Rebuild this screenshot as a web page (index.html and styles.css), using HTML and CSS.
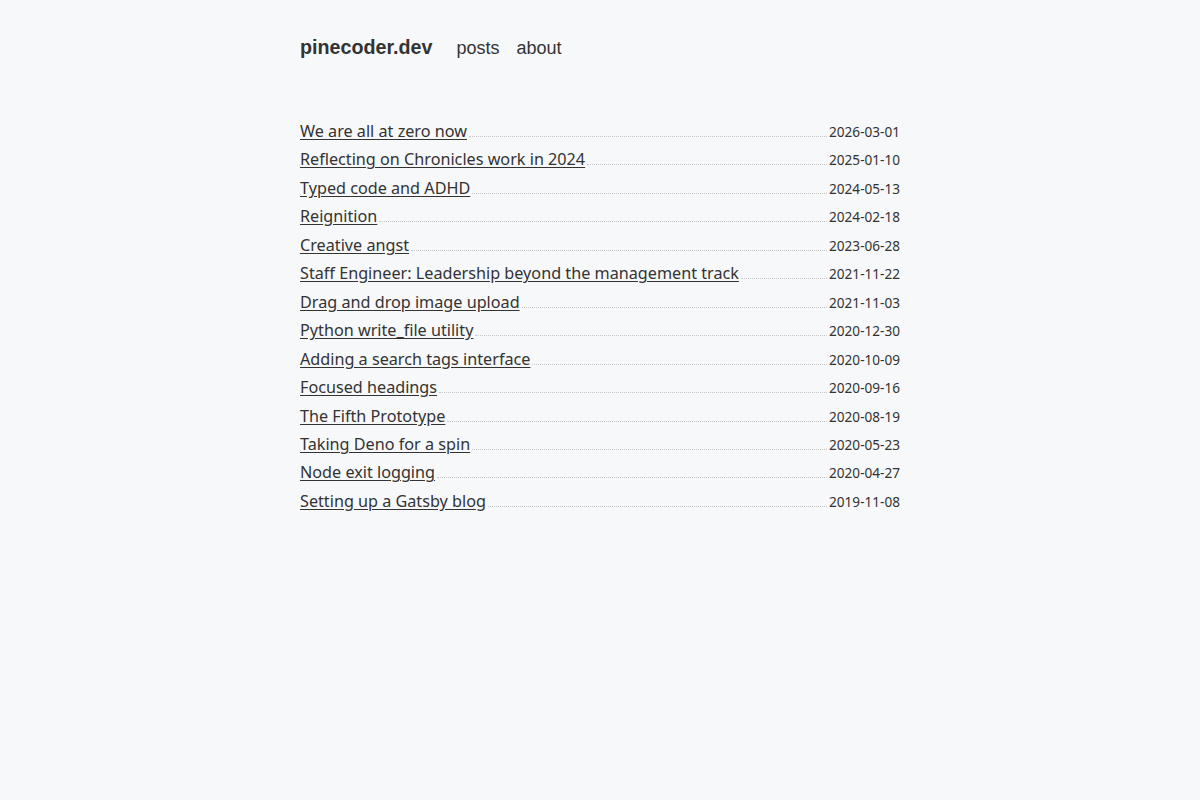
FILE: index.html
```html
<!DOCTYPE html>
<html lang="en">
<head>
<meta charset="utf-8">
<title>pinecoder.dev</title>
<link rel="stylesheet" href="styles.css">
</head>
<body>
<div class="page">
  <header class="site-header">
    <a class="brand" href="#">pinecoder.dev</a>
    <nav class="nav">
      <a href="#">posts</a>
      <a href="#">about</a>
    </nav>
  </header>
  <ul class="posts">
    <li><a href="#">We are all at zero now</a><span class="leader"></span><time>2026-03-01</time></li>
    <li><a href="#">Reflecting on Chronicles work in 2024</a><span class="leader"></span><time>2025-01-10</time></li>
    <li><a href="#">Typed code and ADHD</a><span class="leader"></span><time>2024-05-13</time></li>
    <li><a href="#">Reignition</a><span class="leader"></span><time>2024-02-18</time></li>
    <li><a href="#">Creative angst</a><span class="leader"></span><time>2023-06-28</time></li>
    <li><a href="#">Staff Engineer: Leadership beyond the management track</a><span class="leader"></span><time>2021-11-22</time></li>
    <li><a href="#">Drag and drop image upload</a><span class="leader"></span><time>2021-11-03</time></li>
    <li><a href="#">Python write_file utility</a><span class="leader"></span><time>2020-12-30</time></li>
    <li><a href="#">Adding a search tags interface</a><span class="leader"></span><time>2020-10-09</time></li>
    <li><a href="#">Focused headings</a><span class="leader"></span><time>2020-09-16</time></li>
    <li><a href="#">The Fifth Prototype</a><span class="leader"></span><time>2020-08-19</time></li>
    <li><a href="#">Taking Deno for a spin</a><span class="leader"></span><time>2020-05-23</time></li>
    <li><a href="#">Node exit logging</a><span class="leader"></span><time>2020-04-27</time></li>
    <li><a href="#">Setting up a Gatsby blog</a><span class="leader"></span><time>2019-11-08</time></li>
  </ul>
</div>
</body>
</html>
```

FILE: styles.css
```css
html, body {
  margin: 0;
  padding: 0;
  background: #f7f8fa;
  color: #333;
}

.page {
  width: 600px;
  margin: 0 auto;
  padding-top: 36px;
}

.site-header {
  display: flex;
  align-items: baseline;
  gap: 24px;
  font-family: "Liberation Sans", Arial, sans-serif;
  margin-bottom: 58px;
}

.brand {
  font-size: 19.7px;
  font-weight: bold;
  color: #333;
  text-decoration: none;
}

.nav {
  display: flex;
  gap: 17px;
}

.nav a {
  font-size: 18px;
  color: #333;
  text-decoration: none;
}

.posts {
  list-style: none;
  margin: 0;
  padding: 0;
  font-family: "Noto Sans", sans-serif;
}

.posts li {
  display: flex;
  align-items: baseline;
  height: 28.46px;
  line-height: 28.46px;
}

.posts a {
  font-size: 16.2px;
  color: #333;
  text-decoration: underline;
  text-underline-offset: 2px;
}

.leader {
  flex: 1;
  border-bottom: 1px dotted #c8c8c8;
  margin: 0 2px 0 2px;
  height: 1px;
}

.posts time {
  font-size: 13.6px;
  line-height: 1;
  color: #333;
}
```
